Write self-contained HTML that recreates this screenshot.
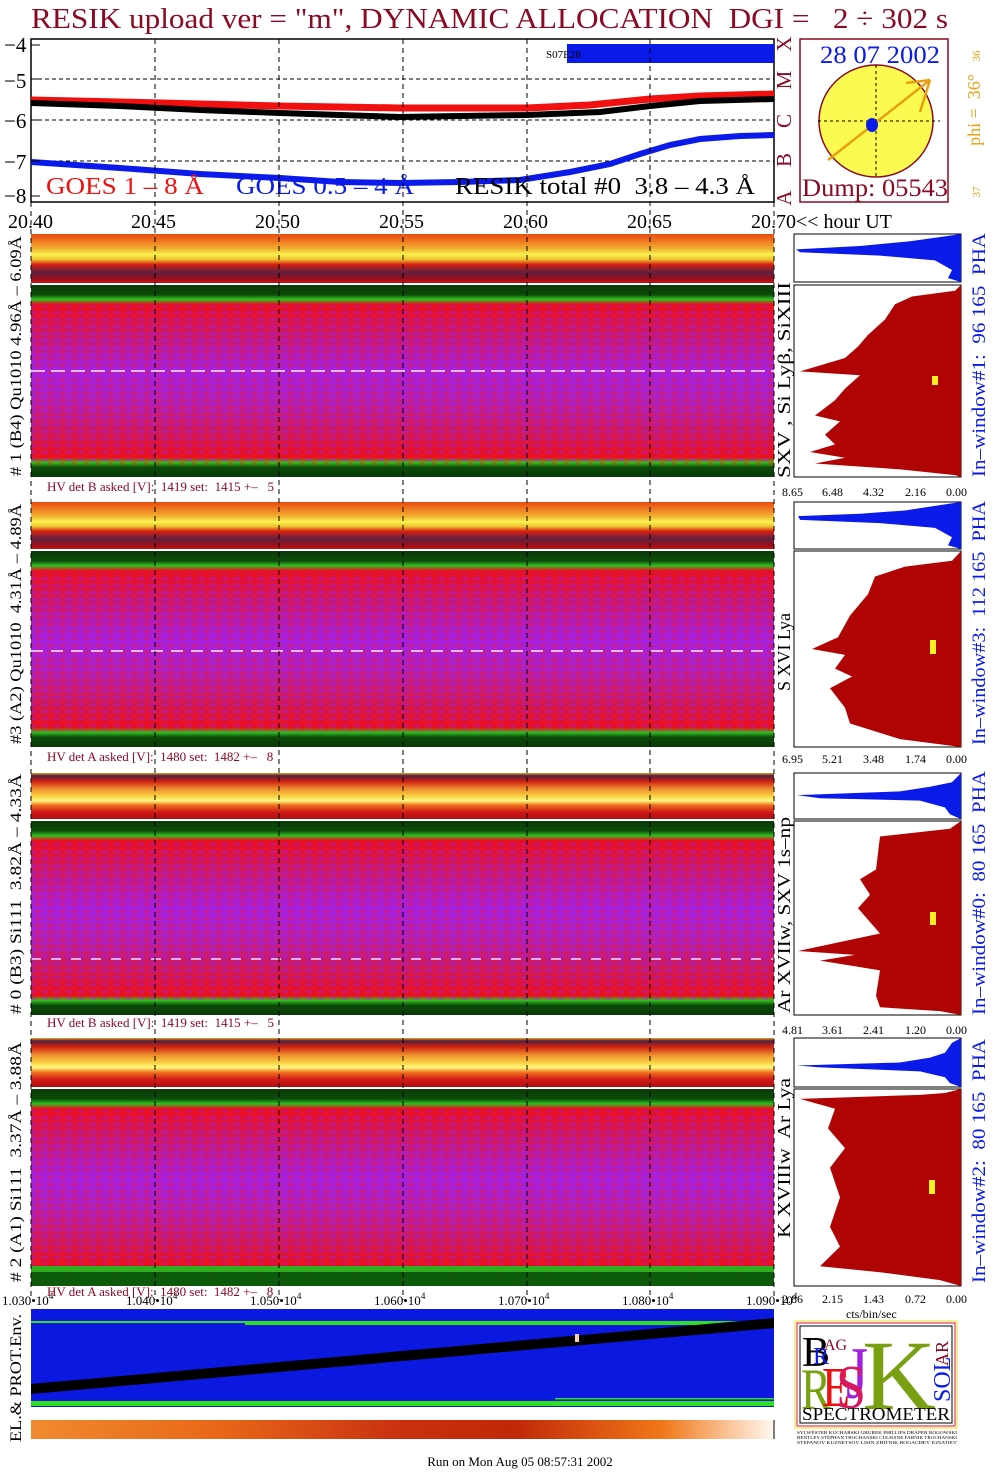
<!DOCTYPE html>
<html><head><meta charset="utf-8"><style>
html,body{margin:0;padding:0;background:#fff;}
svg{display:block;}
text{font-family:"Liberation Serif",serif;white-space:pre;}
</style></head><body>
<svg width="1004" height="1476" viewBox="0 0 1004 1476" xmlns="http://www.w3.org/2000/svg" xml:space="preserve">
<defs>
<linearGradient id="sA" x1="0" y1="0" x2="0" y2="1">
<stop offset="0" stop-color="#e84a10"/><stop offset="0.15" stop-color="#f07a20"/><stop offset="0.3" stop-color="#f0b030"/>
<stop offset="0.42" stop-color="#fbf250"/><stop offset="0.52" stop-color="#f0c030"/><stop offset="0.62" stop-color="#d82010"/>
<stop offset="0.78" stop-color="#602040"/><stop offset="0.9" stop-color="#901020"/><stop offset="1" stop-color="#c81010"/></linearGradient>
<linearGradient id="sB" x1="0" y1="0" x2="0" y2="1">
<stop offset="0" stop-color="#f0a020"/><stop offset="0.06" stop-color="#502040"/><stop offset="0.18" stop-color="#d02010"/>
<stop offset="0.35" stop-color="#f09030"/><stop offset="0.5" stop-color="#f8d040"/><stop offset="0.6" stop-color="#fffa80"/>
<stop offset="0.7" stop-color="#f07020"/><stop offset="0.85" stop-color="#d01818"/><stop offset="1" stop-color="#b01010"/></linearGradient>
<linearGradient id="mG" x1="0" y1="0" x2="0" y2="1">
<stop offset="0" stop-color="#0a3a08"/><stop offset="0.05" stop-color="#0c4a0a"/><stop offset="0.075" stop-color="#30c020"/>
<stop offset="0.1" stop-color="#e81020"/><stop offset="0.25" stop-color="#c81870"/><stop offset="0.45" stop-color="#a820d8"/>
<stop offset="0.6" stop-color="#b420b0"/><stop offset="0.8" stop-color="#d01850"/><stop offset="0.9" stop-color="#e81020"/>
<stop offset="0.925" stop-color="#30c020"/><stop offset="0.95" stop-color="#0c4a0a"/><stop offset="1" stop-color="#0a3a08"/></linearGradient>
<linearGradient id="cb" x1="0" y1="0" x2="1" y2="0">
<stop offset="0" stop-color="#f08a30"/><stop offset="0.25" stop-color="#e86818"/><stop offset="0.5" stop-color="#c83010"/>
<stop offset="0.65" stop-color="#c02808"/><stop offset="0.85" stop-color="#f07818"/><stop offset="1" stop-color="#fff8f0"/></linearGradient>
<pattern id="tex" width="12" height="7" patternUnits="userSpaceOnUse">
<rect x="0" y="0" width="5" height="3" fill="#ff1010" opacity="0.35"/><rect x="6" y="3" width="6" height="3" fill="#a020ff" opacity="0.35"/>
</pattern>
</defs>

<text x="31" y="28" font-size="29" fill="#8a0a24" textLength="917" lengthAdjust="spacingAndGlyphs">RESIK upload ver = "m", DYNAMIC ALLOCATION  DGI =   2 ÷ 302 s</text>

<rect x="31" y="39" width="743" height="163" fill="#fff" stroke="#000" stroke-width="1.5"/>
<g stroke="#000" stroke-dasharray="4,3" stroke-width="1">
<line x1="31" y1="79" x2="774" y2="79"/><line x1="31" y1="120" x2="774" y2="120"/><line x1="31" y1="161" x2="774" y2="161"/>
</g>
<rect x="567" y="44" width="207" height="19" fill="#0a1ae8"/>
<text x="546" y="58" font-size="11" fill="#000">S07E28</text>
<polyline points="31,100 120,102 200,104 280,106 400,108 527,108 590,105 650,99 700,96 774,94" fill="none" stroke="#f01010" stroke-width="7"/>
<polyline points="31,103 120,106 200,110 280,113 400,117 460,116 527,115 600,112 650,106 700,101 774,99" fill="none" stroke="#000" stroke-width="6"/>
<polyline points="31,162 120,168 200,174 280,178 340,182 400,183 460,182 520,180 570,172 610,164 640,154 670,145 700,139 740,136 774,135" fill="none" stroke="#0a1ae8" stroke-width="6"/>
<g font-size="21" fill="#000">
<text x="4" y="52">−4</text><text x="4" y="88">−5</text><text x="4" y="128">−6</text><text x="4" y="169">−7</text><text x="4" y="203">−8</text>
</g>
<g stroke="#000" stroke-width="1">
<line x1="31" y1="45" x2="40" y2="45"/><line x1="31" y1="79" x2="40" y2="79"/><line x1="31" y1="120" x2="40" y2="120"/><line x1="31" y1="161" x2="40" y2="161"/><line x1="31" y1="196" x2="40" y2="196"/>
</g>
<text x="46" y="194" font-size="24" fill="#f01010" textLength="158" lengthAdjust="spacingAndGlyphs">GOES 1 – 8 Å</text>
<text x="236" y="194" font-size="24" fill="#0a1ae8" textLength="178" lengthAdjust="spacingAndGlyphs">GOES 0.5 – 4 Å</text>
<text x="455" y="194" font-size="24" fill="#000" textLength="300" lengthAdjust="spacingAndGlyphs">RESIK total #0  3.8 – 4.3 Å</text>
<g font-size="21" fill="#8a0a24">
<text transform="translate(791,44) rotate(-90)" text-anchor="middle">X</text>
<text transform="translate(791,80) rotate(-90)" text-anchor="middle">M</text>
<text transform="translate(791,121) rotate(-90)" text-anchor="middle">C</text>
<text transform="translate(791,160) rotate(-90)" text-anchor="middle">B</text>
<text transform="translate(791,198) rotate(-90)" text-anchor="middle">A</text>
</g>
<rect x="800" y="39" width="148" height="163" fill="#fff" stroke="#8a0a24" stroke-width="1.5"/>
<text x="880" y="63" font-size="25" fill="#0a1ae8" text-anchor="middle" textLength="120" lengthAdjust="spacingAndGlyphs">28 07 2002</text>
<ellipse cx="876" cy="121" rx="57" ry="56" fill="#fafa50" stroke="#8a0a24" stroke-width="1.5"/>
<line x1="818" y1="121" x2="940" y2="121" stroke="#000" stroke-dasharray="3,3"/>
<line x1="876" y1="65" x2="876" y2="178" stroke="#000" stroke-dasharray="3,3"/>
<line x1="828" y1="160" x2="930" y2="80" stroke="#e8a010" stroke-width="2.5"/>
<line x1="930" y1="80" x2="906" y2="83" stroke="#e8a010" stroke-width="2.5"/>
<line x1="930" y1="80" x2="920" y2="112" stroke="#e8a010" stroke-width="2.5"/>
<ellipse cx="872" cy="125" rx="6" ry="7" fill="#0a1ae8"/>
<text x="875" y="196" font-size="25" fill="#8a0a24" text-anchor="middle" textLength="146" lengthAdjust="spacingAndGlyphs">Dump: 05543</text>
<text transform="translate(980,110) rotate(-90)" font-size="18" fill="#e8a010" text-anchor="middle">phi =  36°</text>
<text transform="translate(980,56) rotate(-90)" font-size="11" fill="#e8a010" text-anchor="middle">36</text>
<text transform="translate(980,192) rotate(-90)" font-size="11" fill="#e8a010" text-anchor="middle">37</text>

<g font-size="20" fill="#000">
<text x="8" y="228">20.40</text><text x="131" y="228">20.45</text><text x="255" y="228">20.50</text><text x="379" y="228">20.55</text>
<text x="503" y="228">20.60</text><text x="627" y="228">20.65</text><text x="751" y="228">20.70&lt;&lt; hour UT</text>
</g>

<rect x="31" y="234" width="743" height="49" fill="url(#sA)"/>
<rect x="31" y="285" width="743" height="192" fill="url(#mG)"/>
<rect x="31" y="305" width="743" height="160" fill="url(#tex)"/>
<line x1="31" y1="371" x2="774" y2="371" stroke="#f0e0ff" stroke-width="2" stroke-dasharray="14,6" opacity="0.8"/>
<rect x="31" y="502" width="743" height="47" fill="url(#sA)"/>
<rect x="31" y="551" width="743" height="196" fill="url(#mG)"/>
<rect x="31" y="572" width="743" height="160" fill="url(#tex)"/>
<line x1="31" y1="651" x2="774" y2="651" stroke="#f0e0ff" stroke-width="2" stroke-dasharray="12,8" opacity="0.8"/>
<rect x="31" y="773" width="743" height="46" fill="url(#sB)"/>
<rect x="31" y="821" width="743" height="194" fill="url(#mG)"/>
<rect x="31" y="842" width="743" height="158" fill="url(#tex)"/>
<line x1="31" y1="959" x2="774" y2="959" stroke="#e8d0ff" stroke-width="2" stroke-dasharray="10,10" opacity="0.8"/>
<rect x="31" y="1038" width="743" height="49" fill="url(#sB)"/>
<rect x="31" y="1089" width="743" height="197" fill="url(#mG)"/>
<rect x="31" y="1110" width="743" height="155" fill="url(#tex)"/>
<rect x="31" y="1266" width="743" height="20" fill="#0e5a0c"/>
<rect x="31" y="1266" width="743" height="6" fill="#30b020"/>

<g font-size="13" fill="#8a0a24">
<text x="47" y="491">HV det B asked [V]:  1419 set:  1415 +–   5</text>
<text x="47" y="761">HV det A asked [V]:  1480 set:  1482 +–   8</text>
<text x="47" y="1027">HV det B asked [V]:  1419 set:  1415 +–   5</text>
<text x="47" y="1296">HV det A asked [V]:  1480 set:  1482 +–   8</text>
</g>

<g font-size="16" fill="#000">
<text transform="translate(21,356) rotate(-90)" text-anchor="middle" textLength="240" lengthAdjust="spacingAndGlyphs"># 1 (B4) Qu1010 4.96Å – 6.09Å</text>
<text transform="translate(21,624) rotate(-90)" text-anchor="middle" textLength="240" lengthAdjust="spacingAndGlyphs">#3 (A2) Qu1010  4.31Å – 4.89Å</text>
<text transform="translate(21,894) rotate(-90)" text-anchor="middle" textLength="240" lengthAdjust="spacingAndGlyphs"># 0 (B3) Si111  3.82Å – 4.33Å</text>
<text transform="translate(21,1162) rotate(-90)" text-anchor="middle" textLength="240" lengthAdjust="spacingAndGlyphs"># 2 (A1) Si111  3.37Å – 3.88Å</text>
<text transform="translate(21,1378) rotate(-90)" text-anchor="middle" textLength="128" lengthAdjust="spacingAndGlyphs">EL.&amp; PROT.Env.</text>
</g>
<g font-size="18" fill="#000">
<text transform="translate(790,380) rotate(-90)" text-anchor="middle" textLength="196" lengthAdjust="spacingAndGlyphs">SXV , Si Lyβ, SiXIII</text>
<text transform="translate(790,652) rotate(-90)" text-anchor="middle">S XVI Lya</text>
<text transform="translate(790,915) rotate(-90)" text-anchor="middle" textLength="196" lengthAdjust="spacingAndGlyphs">Ar XVIIw, SXV 1s–np</text>
<text transform="translate(790,1158) rotate(-90)" text-anchor="middle" textLength="160" lengthAdjust="spacingAndGlyphs">K XVIIIw  Ar Lya</text>
</g>
<g font-size="19" fill="#0a1ae8">
<text transform="translate(985,355) rotate(-90)" text-anchor="middle" textLength="244" lengthAdjust="spacingAndGlyphs">In–window#1:  96 165  PHA</text>
<text transform="translate(985,623) rotate(-90)" text-anchor="middle" textLength="244" lengthAdjust="spacingAndGlyphs">In–window#3:  112 165  PHA</text>
<text transform="translate(985,893) rotate(-90)" text-anchor="middle" textLength="244" lengthAdjust="spacingAndGlyphs">In–window#0:  80 165  PHA</text>
<text transform="translate(985,1161) rotate(-90)" text-anchor="middle" textLength="244" lengthAdjust="spacingAndGlyphs">In–window#2:  80 165  PHA</text>
</g>

<g stroke="#000" stroke-width="1" fill="#fff">
<rect x="794" y="234" width="167" height="48"/><rect x="794" y="285" width="167" height="192"/>
<rect x="794" y="502" width="167" height="47"/><rect x="794" y="551" width="167" height="196"/>
<rect x="794" y="773" width="167" height="46"/><rect x="794" y="821" width="167" height="194"/>
<rect x="794" y="1038" width="167" height="49"/><rect x="794" y="1089" width="167" height="197"/>
</g>
<g fill="#0a1ae8">
<g transform="translate(0,234) scale(1,48)"><polygon points="961,0 945,0.05 910,0.15 860,0.25 796,0.32 800,0.38 880,0.45 935,0.55 952,0.75 948,0.92 961,1"/></g>
<g transform="translate(0,502) scale(1,47)"><polygon points="961,0 945,0.05 905,0.18 860,0.25 798,0.3 800,0.38 880,0.45 935,0.55 952,0.75 948,0.92 961,1"/></g>
<g transform="translate(0,773) scale(1,46)"><polygon points="961,0 952,0.2 930,0.3 900,0.4 797,0.48 820,0.55 920,0.6 945,0.75 950,0.9 961,1"/></g>
<g transform="translate(0,1038) scale(1,49)"><polygon points="961,0 952,0.1 945,0.3 930,0.4 900,0.5 797,0.56 820,0.6 920,0.68 945,0.8 950,0.92 961,1"/></g>
</g>
<g fill="#b00404">
<g transform="translate(0,285) scale(1,192)"><polygon points="961,0 955,0.03 912,0.06 895,0.1 885,0.18 868,0.26 858,0.32 845,0.38 800,0.45 860,0.47 845,0.54 835,0.6 815,0.68 840,0.71 825,0.78 835,0.83 810,0.87 845,0.9 815,0.93 900,0.96 955,0.99 961,1"/></g>
<g transform="translate(0,551) scale(1,196)"><polygon points="961,0 952,0.05 905,0.08 875,0.13 868,0.22 850,0.33 838,0.44 812,0.5 845,0.53 835,0.6 852,0.64 830,0.7 845,0.8 850,0.88 900,0.96 961,1"/></g>
<g transform="translate(0,821) scale(1,194)"><polygon points="961,0 950,0.04 880,0.08 876,0.25 860,0.3 870,0.38 858,0.45 880,0.58 798,0.67 855,0.69 820,0.72 880,0.77 876,0.9 880,0.96 940,0.98 961,1"/></g>
<g transform="translate(0,1089) scale(1,197)"><polygon points="961,0 945,0.02 920,0.03 800,0.05 835,0.1 828,0.2 845,0.3 830,0.4 840,0.55 830,0.7 840,0.8 820,0.9 880,0.93 940,0.97 961,1"/></g>
</g>
<g fill="#f8f020">
<rect x="932" y="376" width="6" height="9"/><rect x="930" y="640" width="6" height="14"/><rect x="930" y="912" width="6" height="13"/><rect x="929" y="1180" width="6" height="14"/>
</g>
<g font-size="12" fill="#000">
<text x="782" y="496">8.65</text><text x="822" y="496">6.48</text><text x="863" y="496">4.32</text><text x="905" y="496">2.16</text><text x="946" y="496">0.00</text>
<text x="782" y="763">6.95</text><text x="822" y="763">5.21</text><text x="863" y="763">3.48</text><text x="905" y="763">1.74</text><text x="946" y="763">0.00</text>
<text x="782" y="1034">4.81</text><text x="822" y="1034">3.61</text><text x="863" y="1034">2.41</text><text x="905" y="1034">1.20</text><text x="946" y="1034">0.00</text>
<text x="782" y="1303">2.86</text><text x="822" y="1303">2.15</text><text x="863" y="1303">1.43</text><text x="905" y="1303">0.72</text><text x="946" y="1303">0.00</text>
<text x="846" y="1318">cts/bin/sec</text>
</g>

<g stroke="#000" stroke-dasharray="5,4" stroke-width="1">
<line x1="155" y1="39" x2="155" y2="1300"/><line x1="279" y1="39" x2="279" y2="1300"/><line x1="403" y1="39" x2="403" y2="1300"/>
<line x1="527" y1="39" x2="527" y2="1300"/><line x1="650" y1="39" x2="650" y2="1300"/>
<line x1="31" y1="202" x2="31" y2="1300"/><line x1="774" y1="202" x2="774" y2="1300"/>
</g>

<g font-size="13" fill="#000">
<text x="2" y="1305">1.030•10<tspan dy="-6" font-size="9">4</tspan></text>
<text x="126" y="1305">1.040•10<tspan dy="-6" font-size="9">4</tspan></text>
<text x="250" y="1305">1.050•10<tspan dy="-6" font-size="9">4</tspan></text>
<text x="374" y="1305">1.060•10<tspan dy="-6" font-size="9">4</tspan></text>
<text x="498" y="1305">1.070•10<tspan dy="-6" font-size="9">4</tspan></text>
<text x="622" y="1305">1.080•10<tspan dy="-6" font-size="9">4</tspan></text>
<text x="746" y="1305">1.090•10<tspan dy="-6" font-size="9">4</tspan></text>
</g>

<rect x="31" y="1309" width="743" height="98" fill="#0a18e0"/>
<rect x="31" y="1321" width="743" height="2" fill="#30e020"/>
<rect x="245" y="1323" width="529" height="2" fill="#30e020"/>
<rect x="31" y="1401" width="743" height="5" fill="#30e020"/>
<rect x="555" y="1398" width="219" height="1.5" fill="#30e020"/>
<polygon points="31,1384 774,1318 774,1328 31,1394" fill="#000"/>
<rect x="575" y="1334" width="4" height="8" fill="#f8d0b0"/>
<rect x="31" y="1420" width="743" height="19" fill="url(#cb)"/>
<line x1="774" y1="1420" x2="774" y2="1439" stroke="#000"/>

<rect x="795" y="1321" width="162" height="107" fill="#fff" stroke="#f0e020" stroke-width="1"/>
<rect x="797" y="1323" width="158" height="103" fill="#fff" stroke="#e01040" stroke-width="1"/>
<rect x="800" y="1326" width="152" height="97" fill="#fff" stroke="#000" stroke-width="1"/>
<text x="802" y="1366" font-size="42" fill="#000">B</text>
<text x="813" y="1364" font-size="24" fill="#0a1ae8">R</text>
<text x="824" y="1350" font-size="16" fill="#8a0a24">AG</text>
<text x="801" y="1409" font-size="58" fill="#78a010" textLength="30" lengthAdjust="spacingAndGlyphs">R</text>
<text x="822" y="1406" font-size="56" fill="#e81010" textLength="28" lengthAdjust="spacingAndGlyphs">E</text>
<text x="846" y="1398" font-size="74" fill="#a020e0" textLength="22" lengthAdjust="spacingAndGlyphs">J</text>
<text x="836" y="1408" font-size="62" fill="#d81860" textLength="30" lengthAdjust="spacingAndGlyphs">S</text>
<text x="862" y="1409" font-size="100" fill="#78a010" textLength="74" lengthAdjust="spacingAndGlyphs">K</text>
<text transform="translate(950,1402) rotate(-90)" font-size="24" fill="#0a1ae8">SOL</text>
<text transform="translate(948,1366) rotate(-90)" font-size="18" fill="#8a0a24">AR</text>
<text x="802" y="1420" font-size="18" fill="#000" textLength="148" lengthAdjust="spacingAndGlyphs">SPECTROMETER</text>
<g font-size="4.5" fill="#000">
<text x="797" y="1434" textLength="160" lengthAdjust="spacingAndGlyphs">SYLWESTER KUCHARSKI GBUREK PHILLIPS DRAPER ROGOWSKI</text>
<text x="797" y="1439" textLength="160" lengthAdjust="spacingAndGlyphs">BENTLEY STEPHAN TROCHANSKI CULHANE FARNIK TROCHANSKI</text>
<text x="797" y="1444" textLength="160" lengthAdjust="spacingAndGlyphs">STEPANOV KUZNETSOV LISIN ZHITNIK BOGACHEV IGNATIEV</text>
</g>

<text x="520" y="1466" font-size="13" fill="#000" text-anchor="middle">Run on Mon Aug 05 08:57:31 2002</text>
</svg>
</body></html>
